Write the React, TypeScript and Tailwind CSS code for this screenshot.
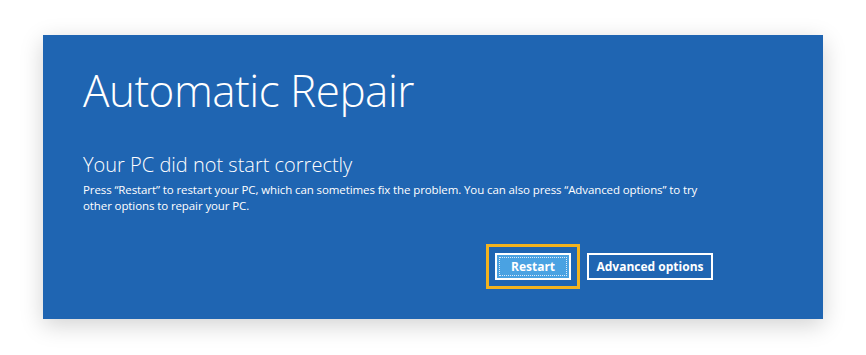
import React from "react";

export default function App() {
  return (
    <div className="w-[866px] h-[355px] bg-white overflow-hidden" style={{ fontFamily: '"Open Sans", "Noto Sans", sans-serif' }}>
      <div className="ml-[43px] mt-[35px] w-[780px] h-[284px] bg-[#1f65b2] shadow-[0_6px_22px_rgba(0,0,0,0.18)] flex flex-col">
        <div className="pl-[40px] pt-[33px] text-white">
          <h1 className="text-[44px] leading-none font-light tracking-[-0.5px]">Automatic Repair</h1>
          <h2 className="mt-[43px] text-[20px] leading-none font-light">Your PC did not start correctly</h2>
          <p className="mt-[7px] text-[11.5px] leading-[16px] font-normal tracking-[-0.1px]">
            Press “Restart” to restart your PC, which can sometimes fix the problem. You can also press “Advanced options” to try
            <br />
            other options to repair your PC.
          </p>
        </div>
        <div className="mt-[39px] flex justify-end pr-[110px] gap-[16px]">
          <button className="w-[76px] h-[27px] border-2 border-white bg-[#4aa2e2] p-[2px] outline-[3px] outline-solid outline-[#f2b31f] outline-offset-[6px]">
            <div className="h-full w-full border border-dotted border-[#dbe9f7] flex items-center justify-center text-white text-[12px] font-bold leading-none">
              Restart
            </div>
          </button>
          <button className="w-[126px] h-[27px] border-2 border-white bg-transparent flex items-center justify-center text-white text-[12px] font-bold leading-none">
            Advanced options
          </button>
        </div>
      </div>
    </div>
  );
}
